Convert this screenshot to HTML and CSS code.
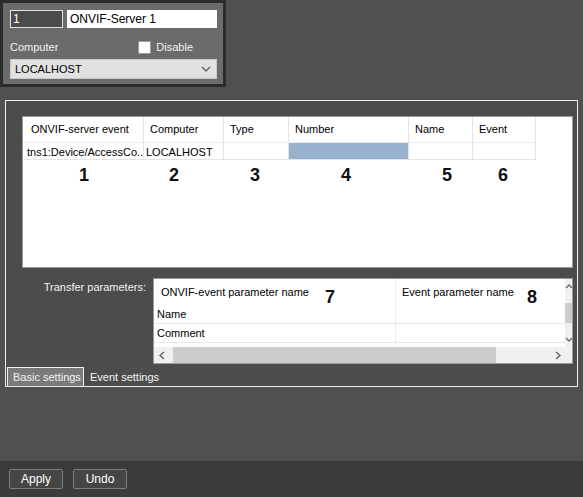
FILE: index.html
```html
<!DOCTYPE html>
<html lang="en">
<head>
  <meta charset="UTF-8" />
  <title>ONVIF-Server 1</title>
  <link rel="stylesheet" href="styles.css">
</head>
<body>
  <div class="content">
    <div class="server-panel">
      <div class="row">
        <div class="id-field">1</div>
        <div class="name-field">ONVIF-Server 1</div>
      </div>
      <div class="row label-row">
        <span class="label">Computer</span>
        <span class="check"><span class="box"></span>Disable</span>
      </div>
      <div class="select">
        <span>LOCALHOST</span>
        <svg width="10" height="6" viewBox="0 0 10 6"><polyline points="1,1 5,5 9,1" fill="none" stroke="#555" stroke-width="1.2"/></svg>
      </div>
    </div>

    <div class="settings-panel">
      <div class="events-box">
        <div class="grid-row head">
          <div class="c1">ONVIF-server event</div>
          <div class="c2">Computer</div>
          <div class="c3">Type</div>
          <div class="c4">Number</div>
          <div class="c5">Name</div>
          <div class="c6">Event</div>
        </div>
        <div class="grid-row data">
          <div class="c1">tns1:Device/AccessCo..</div>
          <div class="c2">LOCALHOST</div>
          <div class="c3"></div>
          <div class="c4 selected"></div>
          <div class="c5"></div>
          <div class="c6"></div>
        </div>
        <span class="mark n1">1</span>
        <span class="mark n2">2</span>
        <span class="mark n3">3</span>
        <span class="mark n4">4</span>
        <span class="mark n5">5</span>
        <span class="mark n6">6</span>
      </div>

      <div class="transfer">
        <div class="transfer-label">Transfer parameters:</div>
        <div class="param-grid">
          <div class="param-body">
            <div class="param-cols">
              <div class="prow phead"><div class="pc1">ONVIF-event parameter name</div><div class="pc2">Event parameter name</div></div>
              <div class="prow"><div class="pc1">Name</div><div class="pc2"></div></div>
              <div class="prow"><div class="pc1">Comment</div><div class="pc2"></div></div>
            </div>
            <div class="vscroll">
              <svg width="8" height="6" viewBox="0 0 8 6"><polyline points="1,5 4,2 7,5" fill="none" stroke="#666" stroke-width="1.3"/></svg>
              <div class="vthumb"></div>
              <svg width="8" height="6" viewBox="0 0 8 6"><polyline points="1,1 4,4 7,1" fill="none" stroke="#666" stroke-width="1.3"/></svg>
            </div>
          </div>
          <div class="hscroll">
            <svg width="8" height="9" viewBox="0 0 8 9"><polyline points="6,1 2,4.5 6,8" fill="none" stroke="#606060" stroke-width="1.4"/></svg>
            <div class="hthumb"></div>
            <svg width="8" height="9" viewBox="0 0 8 9"><polyline points="2,1 6,4.5 2,8" fill="none" stroke="#606060" stroke-width="1.4"/></svg>
          </div>
          <span class="mark n7">7</span>
          <span class="mark n8">8</span>
        </div>
      </div>

      <div class="tabs">
        <div class="tab active">Basic settings</div>
        <div class="tab">Event settings</div>
      </div>
    </div>
  </div>

  <footer>
    <button>Apply</button>
    <button>Undo</button>
  </footer>
</body>
</html>
```

FILE: styles.css
```css
body { margin: 0; width: 583px; height: 497px; overflow: hidden; background: #505050; font-family: "Liberation Sans", Arial, sans-serif; font-size: 11px; color: #f2f2f2; display: flex; flex-direction: column; }
.content { height: 461px; }

/* top server block */
.server-panel { box-sizing: border-box; width: 226px; height: 87px; background: #6b6b6b; border: 3px solid #2b2b2b; padding: 7px 0 0 7px; }
.row { display: flex; align-items: center; }
.id-field { box-sizing: border-box; width: 53px; height: 18px; background: #4b4b4b; border: 1px solid #e4e4e4; color: #fff; font-size: 12px; line-height: 16px; padding-left: 2px; }
.name-field { box-sizing: border-box; width: 150px; height: 18px; margin-left: 4px; background: #fff; color: #000; font-size: 12px; line-height: 18px; padding-left: 3px; }
.label-row { justify-content: space-between; width: 183px; margin-top: 12px; height: 14px; }
.label { font-size: 11px; }
.check { display: flex; align-items: center; font-size: 11px; }
.box { box-sizing: border-box; width: 13px; height: 13px; background: #fff; border: 1px solid #9a9a9a; margin-right: 5px; }
.select { box-sizing: border-box; width: 207px; height: 20px; margin-top: 5px; background: #e1e1e1; border: 1px solid #c8c8c8; color: #000; font-size: 11px; display: flex; align-items: center; justify-content: space-between; padding: 0 5px 0 4px; }

/* main settings block */
.settings-panel { box-sizing: border-box; width: 573px; height: 287px; margin: 13px 0 0 5px; border: 1px solid #ececec; background: #4c4c4c; padding: 15px 0 0 0; display: flex; flex-direction: column; }
.events-box { position: relative; box-sizing: border-box; width: 551px; height: 152px; margin-left: 16px; background: #fff; border: 1px solid #9a9a9a; color: #000; }
.grid-row { display: flex; }
.grid-row div { box-sizing: border-box; border-right: 1px solid #e4e4e4; white-space: nowrap; overflow: hidden; }
.head { height: 25px; line-height: 25px; }
.head div { padding-left: 6px; }
.head .c1 { padding-left: 8px; }
.data { height: 18px; line-height: 18px; }
.data div { border-top: 1px solid #ececec; border-bottom: 1px solid #e4e4e4; padding-left: 2px; }
.data .c1 { padding-left: 4px; }
.c1 { width: 121px; }
.c2 { width: 80px; }
.c3 { width: 65px; }
.c4 { width: 120px; }
.c5 { width: 64px; }
.c6 { width: 63px; }
.data .selected { background: #97b2cf; }

.mark { position: absolute; font-size: 18px; font-weight: bold; color: #111; line-height: 20px; width: 20px; text-align: center; }
.n1 { left: 51px; top: 48px; }
.n2 { left: 141px; top: 48px; }
.n3 { left: 222px; top: 48px; }
.n4 { left: 313px; top: 48px; }
.n5 { left: 414px; top: 48px; }
.n6 { left: 470px; top: 48px; }
.n7 { left: 166px; top: 8px; }
.n8 { left: 368px; top: 8px; }

.transfer { display: flex; margin-top: 10px; }
.transfer-label { width: 140px; text-align: right; margin-right: 7px; margin-top: 3px; }
.param-grid { position: relative; box-sizing: border-box; width: 420px; height: 86px; background: #fff; border: 1px solid #9a9a9a; color: #000; display: flex; flex-direction: column; }
.param-body { display: flex; height: 68px; }
.param-cols { flex: 1; overflow: hidden; }
.prow { display: flex; height: 18px; line-height: 18px; border-bottom: 1px solid #e8e8e8; }
.prow div { box-sizing: border-box; white-space: nowrap; }
.phead { height: 26px; line-height: 26px; border-bottom: none; }
.phead .pc1 { padding-left: 7px; }
.pc1 { width: 242px; border-right: 1px solid #ececec; padding-left: 3px; }
.pc2 { flex: 1; padding-left: 6px; }
.vscroll { width: 7px; background: #f0f0f0; display: flex; flex-direction: column; align-items: center; justify-content: space-between; overflow: hidden; padding: 4px 0; }
.vthumb { width: 7px; height: 20px; background: #cdcdcd; }
.hscroll { height: 16px; background: #f0f0f0; display: flex; align-items: center; padding: 0 10px 0 4px; }
.hthumb { width: 323px; height: 16px; background: #cdcdcd; margin: 0 auto 0 7px; }

.tabs { display: flex; align-items: flex-end; margin-top: auto; padding-left: 1px; }
.tab { height: 18px; line-height: 18px; padding: 0 6px; color: #f4f4f4; font-size: 11px; }
.tab.active { box-sizing: border-box; width: 77px; background: #7a7a7a; border: 1px solid #f0f0f0; border-bottom: none; padding: 0 0 0 5px; height: 19px; white-space: nowrap; overflow: hidden; }

footer { flex: 1; background: #3b3b3b; padding: 8px 0 0 9px; display: flex; align-items: flex-start; gap: 10px; }
button { box-sizing: border-box; width: 54px; height: 20px; background: #454545; color: #fff; border: 1px solid #7e7e7e; border-radius: 2px; font-family: "Liberation Sans", Arial, sans-serif; font-size: 12px; padding: 0; }
```
